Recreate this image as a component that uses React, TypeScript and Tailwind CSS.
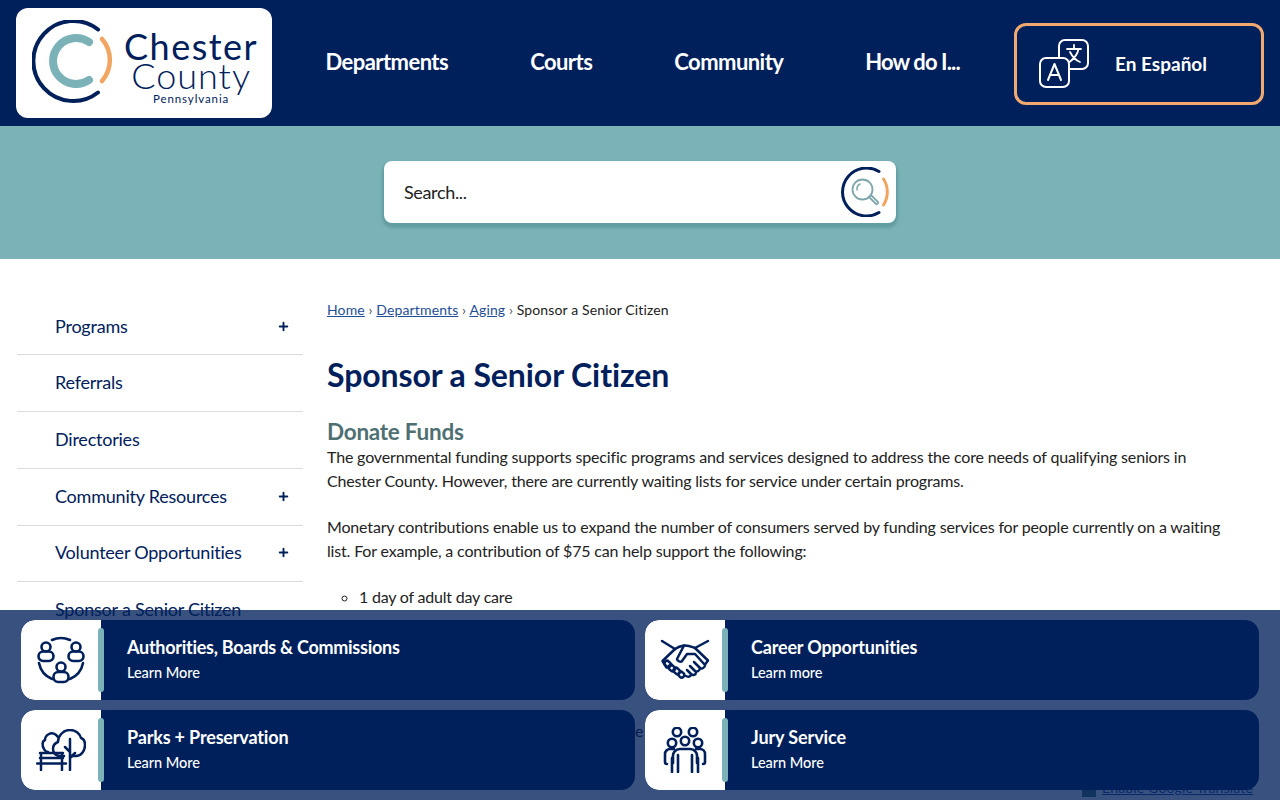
import { Plus } from "lucide-react";

const navy = "#00205b";

function Logo() {
    return (
        <div className="w-[256px] h-[110px] bg-white rounded-[12px] flex items-start shrink-0">
            <svg width="84" height="86" viewBox="0 0 84 86" fill="none" className="ml-[16px] mt-[12px] shrink-0">
                <path d="M66 9.500A40 40 0 1 0 66 72.500" stroke={navy} strokeWidth="4" strokeLinecap="round" />
                <path d="M57 22A23 23 0 1 0 57 60" stroke="#7bb2b7" strokeWidth="8" strokeLinecap="round" />
                <path d="M70 19A32 32 0 0 1 70 61" stroke="#f2a561" strokeWidth="4.500" strokeLinecap="round" />
            </svg>
            <div className="ml-[8px] mt-[24px] flex flex-col items-center text-[#00205b]">
                <div className="text-[36px] leading-[29px] tracking-[1.5px] font-normal">Chester</div>
                <div className="text-[36px] leading-[29px] font-light tracking-[1px]">County</div>
                <div className="text-[11.500px] leading-[12px] tracking-[0.9px] mt-[2.500px]">Pennsylvania</div>
            </div>
        </div>
    );
}

function TranslateIcon() {
    return (
        <svg width="50" height="50" viewBox="0 0 50 50" fill="none" stroke="#fff" strokeWidth="2" strokeLinecap="round" strokeLinejoin="round">
            <path d="M20 18V7a6 6 0 0 1 6-6h17a6 6 0 0 1 6 6v17a6 6 0 0 1-6 6H31" />
            <rect x="1" y="19" width="29" height="29" rx="6" />
            <path d="M9 41l6.500-16L22 41M11 36h9" />
            <path d="M28 10h14M35 6v4M39.500 10c-1 6-5 10-9 13M31 13c2 4 5 8 10 10" strokeWidth="1.800" />
        </svg>
    );
}

function SearchMark() {
    return (
        <svg width="50" height="50" viewBox="0 0 50 50" fill="none">
            <path d="M39 4.500A24 24 0 1 0 39 45.500" stroke={navy} strokeWidth="3" strokeLinecap="round" />
            <path d="M43.500 12A24 24 0 0 1 43.500 38" stroke="#f2a561" strokeWidth="3" strokeLinecap="round" />
            <circle cx="22.500" cy="22.500" r="10" stroke="#7fa6ac" strokeWidth="1.800" />
            <path d="M17 23a6 6 0 0 1 3-6" stroke="#7fa6ac" strokeWidth="1.500" strokeLinecap="round" />
            <path d="M29 30l2-2 7 7a1.500 1.500 0 0 1-2 2z" stroke="#7fa6ac" strokeWidth="1.800" />
        </svg>
    );
}

function BoardsIcon() {
    return (
        <svg width="48" height="48" viewBox="0 0 48 48" fill="none" stroke={navy} strokeWidth="2.600" strokeLinecap="round" strokeLinejoin="round">
            <path d="M15 4a22 22 0 0 1 18 0M2 27a22 22 0 0 0 13 16M46 27a22 22 0 0 1-13 16" />
            <circle cx="9" cy="11" r="4.500" />
            <rect x="1.500" y="15.500" width="15" height="9.500" rx="4.700" />
            <circle cx="39" cy="11" r="4.500" />
            <rect x="31.500" y="15.500" width="15" height="9.500" rx="4.700" />
            <circle cx="24" cy="31" r="4.500" />
            <rect x="16.500" y="36" width="15" height="10" rx="4.700" />
        </svg>
    );
}

function HandshakeIcon() {
    return (
        <svg width="50" height="42" viewBox="0 0 50 42" fill="none" stroke={navy} strokeWidth="2.500" strokeLinecap="round" strokeLinejoin="round">
            <path d="M2 2l13 8M48 2L35 9" />
            <path d="M15 10L2.500 22l4 6.500" />
            <path d="M35 9l13 12.500-3 4" />
            <path d="M15 10c3-2 6-3 9-3.500 4-.5 7 1 11 2.500" />
            <path d="M24 6.500L17 20c0 2 4 3.500 5 2l5-7h8l10 11c0 3-3 4-5 3l-6-6" />
            <path d="M40 29c0 3-3 4-5 3l-5-5M36 33c0 3-3 4-5 2l-4-4M31 36c-1 2-3 2-5 1" />
            <rect x="5" y="22" width="5" height="7" rx="2.500" transform="rotate(-45 7 25)" />
            <rect x="9" y="26" width="5" height="7" rx="2.500" transform="rotate(-45 11 29)" />
            <rect x="14" y="29" width="5" height="7" rx="2.500" transform="rotate(-45 16 32)" />
            <rect x="19" y="33" width="5" height="6" rx="2.500" transform="rotate(-45 21 36)" />
        </svg>
    );
}

function ParkIcon() {
    return (
        <svg width="50" height="42" viewBox="0 0 50 42" fill="none" stroke={navy} strokeWidth="2.500" strokeLinecap="round" strokeLinejoin="round">
            <path d="M22 8c-2-3-6-5-9-3-2 1-4 3-4 6-3 1-3 6-1 9 1 2 2 3 4 3" />
            <path d="M28 27h-4c-4 0-7-3-7-7 0-3 2-6 5-7 0-6 5-12 12-12 6 0 10 4 11 8 3 1 4 4 4 7 0 6-4 11-9 11h-6" />
            <path d="M34 41V10M34 23l-5-5M34 29l5-5" />
            <path d="M4 24h23M4 29h23M1 34.500h29M5 24v17M26 24v17" />
        </svg>
    );
}

function JuryIcon() {
    return (
        <svg width="44" height="46" viewBox="0 0 44 46" fill="none" stroke={navy} strokeWidth="2.600" strokeLinecap="round" strokeLinejoin="round">
            <circle cx="14" cy="5" r="4.200" />
            <circle cx="30" cy="5" r="4.200" />
            <circle cx="9" cy="16" r="4.200" />
            <circle cx="22" cy="14" r="4.200" />
            <circle cx="35" cy="16" r="4.200" />
            <path d="M11 22H7a5 5 0 0 0-5 5v8a2 2 0 0 0 2 2" />
            <path d="M33 22h4a5 5 0 0 1 5 5v8a2 2 0 0 1-2 2" />
            <path d="M9 31v14M35 31v14" />
            <path d="M10 36v-6a7 7 0 0 1 7-8h10a7 7 0 0 1 7 8v6" />
            <path d="M15 28v17M29 28v17" />
        </svg>
    );
}

const sideLinks = [
    { label: "Programs", plus: true, row: "h-[57px]" },
    { label: "Referrals", plus: false, row: "h-[57px] pb-[2px]" },
    { label: "Directories", plus: false, row: "h-[57px] pb-[2px]" },
    { label: "Community Resources", plus: true, row: "h-[57px] pb-[2px]" },
    { label: "Volunteer Opportunities", plus: true, row: "h-[56px] pb-[2px]" },
];

const cards = [
    { title: "Authorities, Boards & Commissions", sub: "Learn More", track: "tracking-[-0.27px]", icon: <BoardsIcon /> },
    { title: "Career Opportunities", sub: "Learn more", track: "tracking-[-0.17px]", icon: <HandshakeIcon /> },
    { title: "Parks + Preservation", sub: "Learn More", track: "tracking-[-0.17px]", icon: <ParkIcon /> },
    { title: "Jury Service", sub: "Learn More", track: "tracking-[-0.1px]", icon: <JuryIcon /> },
];

export default function App() {
    return (
        <div className="h-[800px] overflow-hidden relative bg-white font-['Lato',sans-serif] text-[#222]">
            <header className="h-[126px] bg-[#00205b] flex items-start pl-[16px] pt-[8px]">
                <Logo />
                <nav className="ml-[53.500px] mt-[40px] flex gap-[82px] text-white text-[22px] leading-[28px] font-bold tracking-[-0.55px]">
                    <span>Departments</span>
                    <span>Courts</span>
                    <span>Community</span>
                    <span className="tracking-[-0.9px]">How do I...</span>
                </nav>
                <div className="ml-auto mr-[16px] mt-[15px] w-[250px] h-[82px] border-[3px] border-[#f2a970] rounded-[12px] flex items-center pl-[22px]">
                    <TranslateIcon />
                    <span className="ml-[26px] text-white text-[19px] font-bold">En Español</span>
                </div>
            </header>

            <div className="h-[133px] bg-[#7bb2b7] flex items-start justify-center pt-[35px]">
                <div className="w-[512px] h-[62px] bg-white rounded-[8px] shadow-[0_3px_3px_2px_rgba(90,150,155,0.75)] flex items-center justify-between pl-[20px] pr-[6px]">
                    <span className="text-[18px] tracking-[-0.35px] text-[#222]">Search...</span>
                    <SearchMark />
                </div>
            </div>

            <div className="flex pl-[17px] pt-[39px] pr-[50px]">
                <aside className="w-[286px] shrink-0 text-[#00205b] text-[18px] tracking-[-0.22px]">
                    {sideLinks.map((l) => (
                        <div key={l.label} className={`${l.row} border-b border-[#dddddd] flex items-center justify-between pl-[38px] pr-[13px]`}>
                            <span>{l.label}</span>
                            {l.plus && <Plus size={13} strokeWidth={3.500} />}
                        </div>
                    ))}
                    <div className="h-[55px] flex items-center pl-[38px]">Sponsor a Senior Citizen</div>
                </aside>

                <main className="ml-[24px] flex-1 min-w-0">
                    <div className="text-[14px] leading-[24px] tracking-[0.13px]">
                        <a className="text-[#1f4e96] underline">Home</a>
                        <span className="text-[#555]"> › </span>
                        <a className="text-[#1f4e96] underline">Departments</a>
                        <span className="text-[#555]"> › </span>
                        <a className="text-[#1f4e96] underline">Aging</a>
                        <span className="text-[#555]"> › </span>
                        <span>Sponsor a Senior Citizen</span>
                    </div>
                    <h1 className="mt-[31px] text-[32px] leading-[44px] font-bold tracking-[-0.09px] text-[#00205b]">Sponsor a Senior Citizen</h1>
                    <h2 className="mt-[21px] text-[22.500px] leading-[27px] font-bold tracking-[-0.25px] text-[#4f7073]">Donate Funds</h2>
                    <p className="text-[16px] leading-[24px] tracking-[-0.165px]">
                        The governmental funding supports specific programs and services designed to address the core needs of qualifying seniors in Chester County. However, there are currently waiting lists for service under certain programs.
                    </p>
                    <p className="mt-[22px] text-[16px] leading-[24px] tracking-[-0.165px]">
                        Monetary contributions enable us to expand the number of consumers served by funding services for people currently on a waiting list. For example, a contribution of $75 can help support the following:
                    </p>
                    <ul className="mt-[22px] pl-[32px] text-[16px] leading-[24px] tracking-[-0.2px] list-[circle]">
                        <li>1 day of adult day care</li>
                    </ul>
                </main>
            </div>

            {/* faint text left under the overlay */}
            <div className="absolute left-[635px] top-[719px] text-[16px] leading-[24px]">e</div>
            <div className="absolute right-[27px] top-[778px] flex items-center gap-[6px] text-[14px] leading-[20px] tracking-[0.17px]">
                <span className="w-[14px] h-[14px] bg-[#4a7d6a] mt-[4px]" />
                <a className="text-[#1f4e96] underline">Enable Google Translate</a>
            </div>

            <div className="absolute inset-x-0 bottom-0 h-[190px] bg-[#00205b]/[.78] px-[21px] pt-[10px] grid grid-cols-2 gap-[10px] content-start">
                {cards.map((c) => (
                    <div key={c.title} className="h-[80px] bg-[#00205b] rounded-[14px] flex overflow-hidden text-white">
                        <div className="w-[80px] bg-white rounded-l-[14px] relative flex items-center justify-center shrink-0">
                            {c.icon}
                            <div className="absolute right-[-3px] top-[8px] w-[6px] h-[64px] rounded-[3px] bg-[#7bb2b7]" />
                        </div>
                        <div className="pl-[26px] pt-[15px]">
                            <div className={`text-[18px] leading-[24px] font-bold ${c.track}`}>{c.title}</div>
                            <div className="mt-[3px] text-[14.500px] leading-[22px] font-medium tracking-[-0.05px]">{c.sub}</div>
                        </div>
                    </div>
                ))}
            </div>
        </div>
    );
}
